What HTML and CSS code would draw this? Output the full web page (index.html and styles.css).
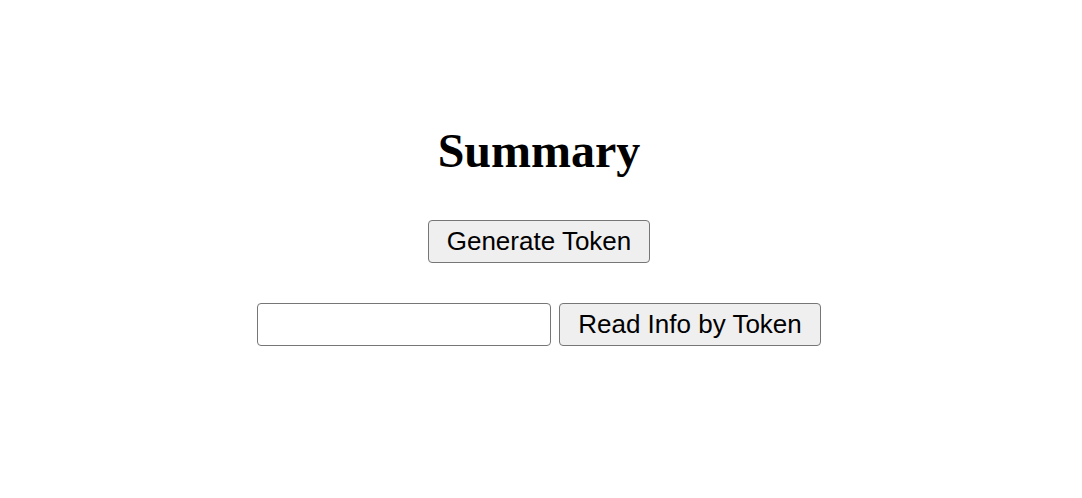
FILE: index.html
```html
<!DOCTYPE html>
<html>
<head>
<meta charset="utf-8">
<link rel="stylesheet" href="styles.css">
</head>
<body>
<main class="page">
  <h1 class="title">Summary</h1>
  <div class="row">
    <button class="btn btn-gen">Generate Token</button>
  </div>
  <div class="row row-read">
    <input class="token-input" type="text">
    <button class="btn btn-read">Read Info by Token</button>
  </div>
</main>
</body>
</html>
```
FILE: styles.css
```css
html, body {
  margin: 0;
  padding: 0;
  background: #ffffff;
}
.page {
  display: flex;
  flex-direction: column;
  align-items: center;
  padding-top: 123px;
  padding-right: 4px;
}
.title {
  margin: 0;
  font-family: "Liberation Serif", "Times New Roman", serif;
  font-weight: bold;
  font-size: 48px;
  line-height: 55px;
  color: #000;
}
.row {
  display: flex;
  align-items: center;
  gap: 8px;
}
.btn {
  font-family: "Liberation Sans", Arial, sans-serif;
  font-size: 26px;
  color: #000;
  background: #efefef;
  border: 1px solid #767676;
  border-radius: 4px;
  height: 43px;
  padding: 0 16px;
  margin: 0;
  box-sizing: border-box;
}
.btn-gen {
  margin-top: 42px;
  width: 222px;
}
.row-read {
  margin-top: 40px;
}
.btn-read {
  width: 262px;
}
.token-input {
  width: 294px;
  height: 43px;
  box-sizing: border-box;
  border: 1px solid #767676;
  border-radius: 4px;
  margin: 0;
  padding: 2px 4px;
  background: #fff;
  font-family: "Liberation Sans", Arial, sans-serif;
  font-size: 26px;
}
```
